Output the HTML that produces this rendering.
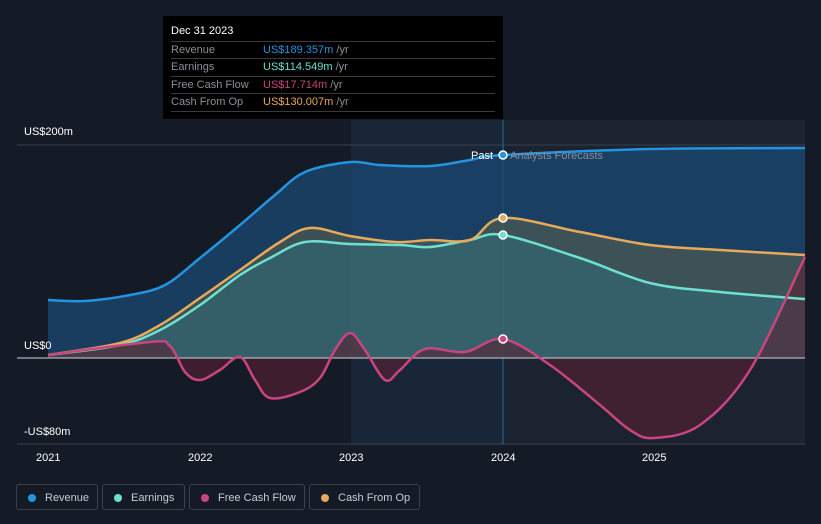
<!DOCTYPE html>
<html><head><style>
body{margin:0;background:#151b26;width:821px;height:524px;overflow:hidden;font-family:"Liberation Sans",sans-serif;position:relative}
.t{position:absolute;color:#fff;font-size:11px}
.tip{position:absolute;left:163px;top:16px;width:340px;height:103px;background:#000;}
.tip .h{position:absolute;left:8px;top:9px;color:#fff;font-size:11px}
.row{position:absolute;left:8px;width:324px;height:17px;border-top:1px solid #3a3a3a;font-size:11px;color:#8a8f98;line-height:17px}
.row span{position:absolute;left:92px}
.row i{font-style:normal;color:#8a8f98}
.leg{position:absolute;top:484px;height:26px;border:1px solid #3a404c;border-radius:3px;color:#c8ccd2;font-size:11px;line-height:26px;box-sizing:border-box}
.leg b{position:absolute;left:11px;top:9px;width:8px;height:8px;border-radius:50%}
</style></head><body>
<svg id="s" width="821" height="524" style="position:absolute;left:0;top:0">
<rect x="351" y="120" width="152" height="325" fill="#1a2e44" opacity="0.6"/>
<rect x="503" y="120" width="302" height="325" fill="#1b2230"/>
<line x1="17" y1="145" x2="805" y2="145" stroke="#3a404c"/>
<line x1="17" y1="444" x2="805" y2="444" stroke="#3a404c"/>
<line x1="503" y1="120" x2="503" y2="444" stroke="#2b6a96" stroke-width="1"/>
<g id="fills"></g>
<line x1="17" y1="358" x2="805" y2="358" stroke="#d0d4da" stroke-width="1"/>
<g id="lines" fill="none" stroke-width="2.5" stroke-linejoin="round"></g>
<g id="dots">
<circle cx="503" cy="155" r="4" fill="#2394df" stroke="#fff" stroke-width="1.5"/>
<circle cx="503" cy="218" r="4" fill="#e8a95a" stroke="#fff" stroke-width="1.5"/>
<circle cx="503" cy="235" r="4" fill="#6ee0cf" stroke="#fff" stroke-width="1.5"/>
<circle cx="503" cy="339" r="4" fill="#c8457f" stroke="#fff" stroke-width="1.5"/>
</g>
</svg>
<script>
var R=[[48,300],[85,301],[130,295],[165,285],[200,258],[240,225],[275,195],[305,172],[350,162],[380,165],[430,166],[470,160],[503,155],[650,149],[805,148]];
var E=[[48,355],[120,345],[160,330],[200,305],[240,275],[270,258],[305,242],[350,244],[400,245],[430,247],[470,240],[503,235],[580,258],[650,283],[720,292],[805,299]];
var C=[[48,355],[120,343],[160,325],[200,298],[240,270],[280,242],[310,228],[350,236],[395,242],[430,240],[470,240],[503,218],[580,232],[650,245],[720,250],[805,255]];
var F=[[48,355],[150,342],[170,346],[185,372],[200,380],[220,370],[240,357],[255,380],[270,398],[300,392],[320,378],[335,350],[350,333],[365,350],[385,380],[400,370],[425,349],[465,352],[503,339],[550,365],[600,405],[630,430],[654,438],[700,425],[750,370],[805,257]];
function sm(p){var d="M"+p[0][0]+","+p[0][1];for(var i=0;i<p.length-1;i++){var a=p[i-1]||p[i],b=p[i],c=p[i+1],e=p[i+2]||c;var t=6;d+=" C"+(b[0]+(c[0]-a[0])/t)+","+(b[1]+(c[1]-a[1])/t)+" "+(c[0]-(e[0]-b[0])/t)+","+(c[1]-(e[1]-b[1])/t)+" "+c[0]+","+c[1];}return d;}
var ns="http://www.w3.org/2000/svg";
function add(g,d,attrs){var el=document.createElementNS(ns,"path");el.setAttribute("d",d);for(var k in attrs)el.setAttribute(k,attrs[k]);document.getElementById(g).appendChild(el);}
add("fills",sm(R)+" L805,358 L48,358Z",{fill:"#1a4a73",opacity:"0.75"});
add("fills",sm(E)+" L805,358 L48,358Z",{fill:"#4d7b70",opacity:"0.55"});
add("fills",sm(C)+" L805,299 "+sm(E.slice().reverse()).slice(1)+"Z",{fill:"#6b6a4a",opacity:"0.45"});
add("fills",sm(F)+" L805,358 L48,358Z",{fill:"#5a2234",opacity:"0.6"});
add("lines",sm(R),{stroke:"#2394df"});
add("lines",sm(E),{stroke:"#6ee0cf"});
add("lines",sm(C),{stroke:"#e8a95a"});
add("lines",sm(F),{stroke:"#c8457f"});
</script>
<div class="t" style="left:24px;top:126px">US$200m</div>
<div class="t" style="left:24px;top:340px">US$0</div>
<div class="t" style="left:24px;top:426px">-US$80m</div>
<div class="t" style="left:471px;top:150px">Past</div>
<div class="t" style="left:510px;top:150px;color:#8a8f98">Analysts Forecasts</div>
<div class="t" style="left:36px;top:452px">2021</div>
<div class="t" style="left:188px;top:452px">2022</div>
<div class="t" style="left:339px;top:452px">2023</div>
<div class="t" style="left:491px;top:452px">2024</div>
<div class="t" style="left:642px;top:452px">2025</div>
<div class="tip">
<div class="h">Dec 31 2023</div>
<div class="row" style="top:25px">Revenue<span><i style="color:#2394df">US$189.357m</i> /yr</span></div>
<div class="row" style="top:42px">Earnings<span><i style="color:#6ee0cf">US$114.549m</i> /yr</span></div>
<div class="row" style="top:60px">Free Cash Flow<span><i style="color:#c8457f">US$17.714m</i> /yr</span></div>
<div class="row" style="top:77px;border-bottom:1px solid #3a3a3a">Cash From Op<span><i style="color:#e8a95a">US$130.007m</i> /yr</span></div>
</div>
<div class="leg" style="left:16px;width:82px"><b style="background:#2394df"></b><span style="margin-left:28px">Revenue</span></div>
<div class="leg" style="left:102px;width:83px"><b style="background:#6ee0cf"></b><span style="margin-left:28px">Earnings</span></div>
<div class="leg" style="left:189px;width:116px"><b style="background:#c8457f"></b><span style="margin-left:28px">Free Cash Flow</span></div>
<div class="leg" style="left:309px;width:111px"><b style="background:#e8a95a"></b><span style="margin-left:28px">Cash From Op</span></div>
</body></html>
